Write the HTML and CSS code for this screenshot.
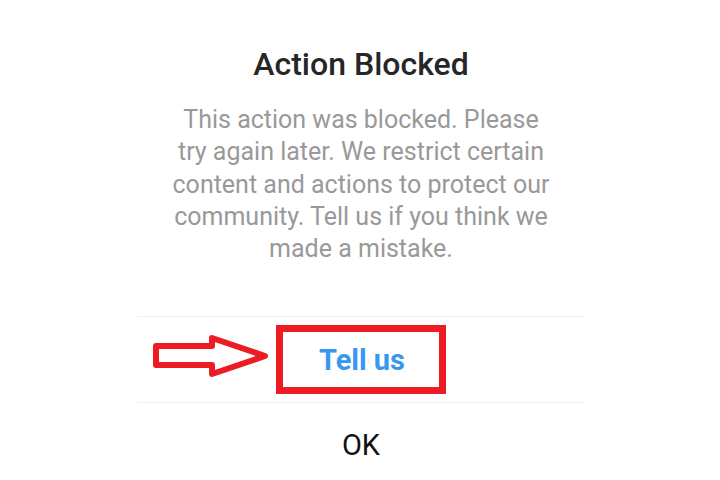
FILE: index.html
```html
<!DOCTYPE html>
<html lang="en">
  <head>
    <meta charset="UTF-8" />
    <meta name="viewport" content="width=device-width, initial-scale=1.0" />
    <title>Action Blocked</title>
    <link rel="stylesheet" href="styles.css">
  </head>
  <body>
    <div class="dialog">
      <h2 class="dialog-title">Action Blocked</h2>
      <p class="dialog-text">
        This action was blocked. Please try again later. We restrict certain
        content and actions to protect our community. Tell us if you think we
        made a mistake.
      </p>

      <div class="dialog-actions">
        <div class="action-row">
          <!-- annotation arrow pointing at the button -->
          <svg class="pointer" width="122" height="48" viewBox="0 0 122 48">
            <polygon
              points="6,14 62,14 62,6 115,24 62,42 62,33 6,33"
              fill="#fff"
              stroke="#ed1c24"
              stroke-width="6"
              stroke-linejoin="round"
            />
          </svg>
          <button class="action-btn action-primary">
            <span class="highlight">Tell us</span>
          </button>
        </div>
        <div class="action-row">
          <button class="action-btn action-ok">OK</button>
        </div>
      </div>
    </div>
  </body>
</html>
```

FILE: styles.css
```css
body {
  font-family: Roboto, "Noto Sans", Arial, sans-serif;
  margin: 0;
  background-color: #ffffff;
}
.dialog {
  width: 448px;
  margin: 0 auto;
  padding-top: 44px;
  transform: translateX(1px);
}
.dialog-title {
  margin: 0;
  font-size: 32px;
  line-height: 40px;
  font-weight: 500;
  color: #262626;
  text-align: center;
}
.dialog-text {
  margin: 20px 0 0;
  padding: 0 30px;
  font-size: 25px;
  line-height: 32.3px;
  color: #999999;
  text-align: center;
}
.dialog-actions {
  margin-top: 51px;
}
.action-row {
  position: relative;
  border-top: 1px solid #efefef;
}
.pointer {
  position: absolute;
  left: 13px;
  top: 15px;
}
.action-btn {
  display: flex;
  justify-content: center;
  align-items: center;
  width: 100%;
  height: 85px;
  padding: 0;
  border: none;
  background: none;
  font-family: inherit;
  font-size: 29px;
  cursor: pointer;
}
.action-primary {
  color: #3897f0;
  font-weight: 700;
}
.highlight {
  display: flex;
  justify-content: center;
  align-items: center;
  width: 154px;
  height: 55px;
  padding-left: 2px;
  border: 7px solid #ed1c24;
}
.action-ok {
  color: #111111;
  font-weight: 400;
  line-height: 85px;
}
```
